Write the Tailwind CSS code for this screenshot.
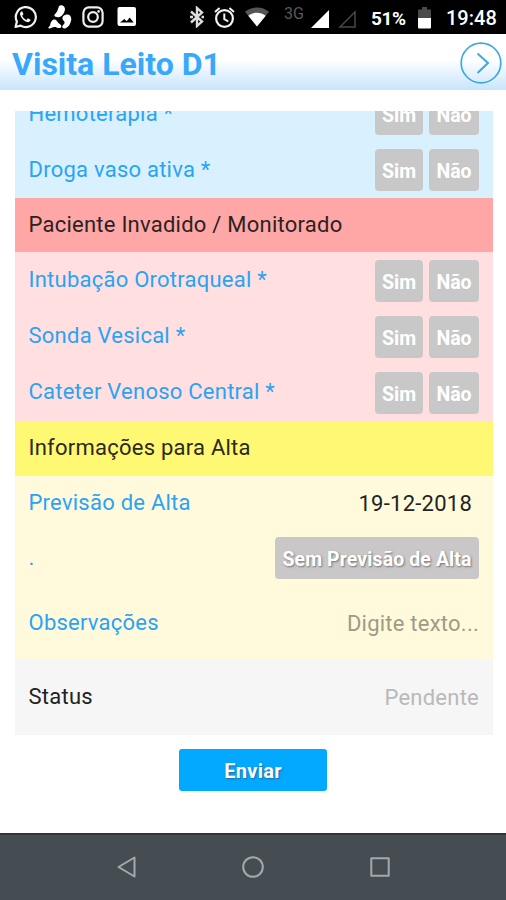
<!DOCTYPE html>
<html lang="pt-BR">

<head>
  <meta charset="UTF-8">
  <meta name="viewport" content="width=device-width, initial-scale=1.0">
  <title>Visita Leito D1</title>
  <script src="https://cdn.jsdelivr.net/npm/@tailwindcss/browser@4"></script>
</head>

<body class="bg-white font-[Roboto,sans-serif] h-[900px] flex flex-col overflow-hidden whitespace-nowrap">
  <!-- Status bar -->
  <div class="h-[34px] shrink-0 bg-black flex items-center text-white pl-[13px] pr-[11px]">
    <!-- WhatsApp -->
    <svg class="w-6 h-6" viewBox="0 0 24 24" fill="none" stroke="#f2f2f2" stroke-width="2.2">
      <path d="M2.500 22l1.400-5.400A10 10 0 1 1 7.600 20.600z" stroke-linejoin="round"/>
      <path d="M8.200 6.500c-1.500 1-1.500 2.800-.5 4.700 1.500 2.900 3.600 4.900 6.300 5.800 1.600.5 3.400-.5 3.600-2.200l-2.700-1.500-1.500 1.600c-1.900-.8-3.400-2.300-4.200-4.100l1.300-1.500-1.100-2.800z" fill="#f2f2f2" stroke="none"/>
    </svg>
    <!-- Runner -->
    <svg class="w-6 h-6 ml-[11px]" viewBox="0 0 24 24" fill="#fff">
      <path d="M12.500 0.300C15 0 17.400 2 16.900 5c-.5 3.300-2.600 6-5.200 6.900-2 .6-5 .1-5.400-1.200-.3-1 1.700-2.200 2.900-4.400C10.300 4.200 10.300.8 12.500.3z"/>
      <path d="M18.500 9.500c3.200-.5 5.200 2 4.700 5.400-.6 3.900-2.700 7-5.500 8.400-1.800.8-3.700-.1-3.400-1.800.3-1.500 2.200-2.300 2.300-4 .1-1.500-2.200-1.900-2.200-4.200 0-2.200 1.900-3.500 4.100-3.800z"/>
      <path d="M.3 22.600c.7-1 1.500-1.300 1.900-2.800.5-2.600 1.700-5.200 4.200-5.200 2.100 0 2.500 2.100 4 3.300 1.400 1 3 1.600 3 3.300 0 1.500-1.500 2.200-3.300 1.800-1.500-.4-2.300-1.200-3.800-1-2.200.3-3.400 1.600-5.300 1.400-.5-.1-.8-.4-.7-.8z"/>
    </svg>
    <!-- Instagram -->
    <svg class="w-[22px] h-[22px] ml-[10px]" viewBox="0 0 22 22" fill="none" stroke="#eee" stroke-width="2.200">
      <rect x="1.400" y="1.400" width="19.200" height="19.200" rx="5.500"/>
      <circle cx="11" cy="11" r="4.800"/>
      <circle cx="16.600" cy="5.400" r="1.300" fill="#eee" stroke="none"/>
    </svg>
    <!-- Picture -->
    <svg class="w-5 h-5 ml-[13px]" viewBox="0 0 20 20">
      <path fill="#fff" fill-rule="evenodd" d="M2.500 0h14.500a2 2 0 0 1 2 2v15a2 2 0 0 1-2 2H2.500a2 2 0 0 1-2-2V2a2 2 0 0 1 2-2zM3 15.500h13.700l-4-5-3 3.700-2.300-2.200z"/>
    </svg>

    <!-- Bluetooth -->
    <svg class="w-[14px] h-[22px] ml-auto" viewBox="0 0 14 22" fill="none" stroke="#ddd" stroke-width="2.400">
      <path d="M1 5.500L12 15.600L7 20V2L12 6.400L1 16.500"/>
      <path d="M0 11h3M11.500 11h2.500"/>
    </svg>
    <!-- Alarm -->
    <svg class="w-[21px] h-[22px] ml-[10px] mt-[2px]" viewBox="0 0 21 22" fill="none" stroke="#f2f2f2" stroke-width="2.200">
      <circle cx="10.500" cy="11.500" r="8.400"/>
      <path d="M10.300 6.500v5.600l4 2.400M1 5l4.600-4M20 5l-4.600-4" stroke-width="2"/>
    </svg>
    <!-- Wifi -->
    <svg class="w-[24px] h-[20px] ml-[10px]" viewBox="0 0 24 20">
      <path d="M0 4.800C7-1 17-1 24 4.800L12 19.500z" fill="#555"/>
      <path d="M3.300 8.700C8.500 4.700 15.500 4.700 20.700 8.700L12 19.500z" fill="#fff"/>
    </svg>
    <span class="w-[20px] ml-[15px] mb-[6px] text-[16px] leading-none text-[#5a5a5a]">3G</span>
    <svg class="w-[18px] h-[18px] ml-[7px] mt-[3px]" viewBox="0 0 18 18"><path d="M0 18L18 0v18z" fill="#fff"/></svg>
    <svg class="w-[18px] h-[18px] ml-[9px] mt-[3px]" viewBox="0 0 18 18"><path d="M2 17L17 2v15z" fill="none" stroke="#484848" stroke-width="1.500"/></svg>
    <span class="w-[37px] ml-[15px] mt-[2px] text-[19px] leading-none font-bold tracking-[-0.400px]">51%</span>
    <svg class="w-[13px] h-[22px] ml-[10px] mt-[2px]" viewBox="0 0 13 22">
      <path d="M4 0h5v2.500h4V12H0V2.500h4z" fill="#4a4a4a"/>
      <path d="M0 11h13v9.500a1 1 0 0 1-1 1H1a1 1 0 0 1-1-1z" fill="#fff"/>
    </svg>
    <span class="w-[49px] ml-[15px] mt-[2px] text-[20px] leading-none font-medium">19:48</span>
  </div>

  <!-- Header -->
  <header class="h-[56px] shrink-0 flex items-center justify-between pl-3 pr-1 bg-linear-to-b from-white from-45% to-[#c8e5fb]">
    <h1 class="text-[32px] leading-none font-bold text-[#37a8fb] mt-[4px]">Visita Leito D1</h1>
    <svg class="w-[42px] h-[42px] mt-px" viewBox="0 0 42 42" fill="none" stroke="#3ba9e0" stroke-width="1.700">
      <circle cx="21" cy="21" r="19.800"/>
      <path d="M17.500 11.500L28 21L17.500 31" stroke-width="2"/>
    </svg>
  </header>

  <!-- Form -->
  <main class="mt-[21px] ml-[14.500px] mr-[13px] h-[624px] shrink-0 overflow-hidden text-[22px] tracking-[0.240px] text-[#2aa3f5]">
    <section class="bg-[#d9f1ff] h-[87px] flex flex-col justify-end">
      <div class="h-[56px] shrink-0 flex items-center justify-between px-[14px]">
        <label class="pb-[2px]">Hemoterapia *</label>
        <div class="flex gap-[6px] text-[19.500px] tracking-normal font-bold text-white text-shadow-[1px_1px_2px_#777]">
          <button class="w-[48px] h-[42px] pt-[4px] rounded bg-[#c8c8c8]">Sim</button>
          <button class="w-[50px] h-[42px] pt-[4px] rounded bg-[#c8c8c8]">Não</button>
        </div>
      </div>
      <div class="h-[56px] shrink-0 flex items-center justify-between px-[14px]">
        <label class="pb-[2px]">Droga vaso ativa *</label>
        <div class="flex gap-[6px] text-[19.500px] tracking-normal font-bold text-white text-shadow-[1px_1px_2px_#777]">
          <button class="w-[48px] h-[42px] pt-[4px] rounded bg-[#c8c8c8]">Sim</button>
          <button class="w-[50px] h-[42px] pt-[4px] rounded bg-[#c8c8c8]">Não</button>
        </div>
      </div>
    </section>

    <h2 class="h-[54px] flex items-center px-[14px] pb-[2px] bg-[#ffa7a7] text-[#2b2222]">Paciente Invadido / Monitorado</h2>
    <section class="bg-[#ffdfdf] h-[169px] pt-px grid grid-rows-3">
      <div class="flex items-center justify-between px-[14px]">
        <label class="pb-[3px]">Intubação Orotraqueal *</label>
        <div class="flex gap-[6px] text-[19.500px] tracking-normal font-bold text-white text-shadow-[1px_1px_2px_#777]">
          <button class="w-[48px] h-[42px] pt-[4px] rounded bg-[#c8c8c8]">Sim</button>
          <button class="w-[50px] h-[42px] pt-[4px] rounded bg-[#c8c8c8]">Não</button>
        </div>
      </div>
      <div class="flex items-center justify-between px-[14px]">
        <label class="pb-[3px]">Sonda Vesical *</label>
        <div class="flex gap-[6px] text-[19.500px] tracking-normal font-bold text-white text-shadow-[1px_1px_2px_#777]">
          <button class="w-[48px] h-[42px] pt-[4px] rounded bg-[#c8c8c8]">Sim</button>
          <button class="w-[50px] h-[42px] pt-[4px] rounded bg-[#c8c8c8]">Não</button>
        </div>
      </div>
      <div class="flex items-center justify-between px-[14px]">
        <label class="pb-[3px]">Cateter Venoso Central *</label>
        <div class="flex gap-[6px] text-[19.500px] tracking-normal font-bold text-white text-shadow-[1px_1px_2px_#777]">
          <button class="w-[48px] h-[42px] pt-[4px] rounded bg-[#c8c8c8]">Sim</button>
          <button class="w-[50px] h-[42px] pt-[4px] rounded bg-[#c8c8c8]">Não</button>
        </div>
      </div>
    </section>

    <h2 class="h-[55px] flex items-center px-[14px] pb-[3px] bg-[#fff873] text-[#2b2a1c]">Informações para Alta</h2>
    <section class="bg-[#fffadb] h-[183px]">
      <div class="h-[54px] flex items-center justify-between px-[14px]">
        <label class="pb-[2px]">Previsão de Alta</label>
        <span class="pr-[7px] pt-[1px] text-[#222]">19-12-2018</span>
      </div>
      <div class="h-[56px] flex items-center justify-between px-[14px]">
        <label class="pb-px">.</label>
        <button class="w-[204px] h-[42px] pt-[4px] rounded bg-[#c9c7c8] text-[19.500px] font-bold tracking-[0.100px] text-white text-shadow-[1px_1px_2px_#777]">Sem Previsão de Alta</button>
      </div>
      <div class="h-[73px] flex items-center justify-between px-[14px]">
        <label>Observações</label>
        <span class="pt-[2px] text-[#9d9b86]">Digite texto...</span>
      </div>
    </section>
    <section class="bg-[#f6f6f6] h-[76px] flex items-center justify-between px-[14px]">
      <span class="pb-[2px] text-[#222]">Status</span>
      <span class="pt-px text-[#b9b9b9]">Pendente</span>
    </section>
  </main>

  <button class="mt-[14px] w-[148px] h-[42px] pt-px shrink-0 self-center rounded-[3px] bg-[#03a9ff] text-[20px] font-bold tracking-[0.300px] text-white text-shadow-[1px_1px_2px_#2468a0]">Enviar</button>

  <!-- Android navigation -->
  <nav class="mt-auto h-[67px] shrink-0 bg-[#464d52] border-t-2 border-[#2f3437] flex items-center justify-center gap-[102.500px] pb-[2px]">
    <svg class="w-6 h-6" viewBox="0 0 24 24" fill="none" stroke="#a3a9ac" stroke-width="2" stroke-linejoin="round"><path d="M3.500 12L19.500 2.500v19z"/></svg>
    <svg class="w-6 h-6" viewBox="0 0 24 24" fill="none" stroke="#a3a9ac" stroke-width="2"><circle cx="12" cy="12" r="9.800"/></svg>
    <svg class="w-6 h-6" viewBox="0 0 24 24" fill="none" stroke="#a3a9ac" stroke-width="2" stroke-linejoin="round"><path d="M3.300 3.300h17.400v17.400H3.300z"/></svg>
  </nav>
</body>

</html>
